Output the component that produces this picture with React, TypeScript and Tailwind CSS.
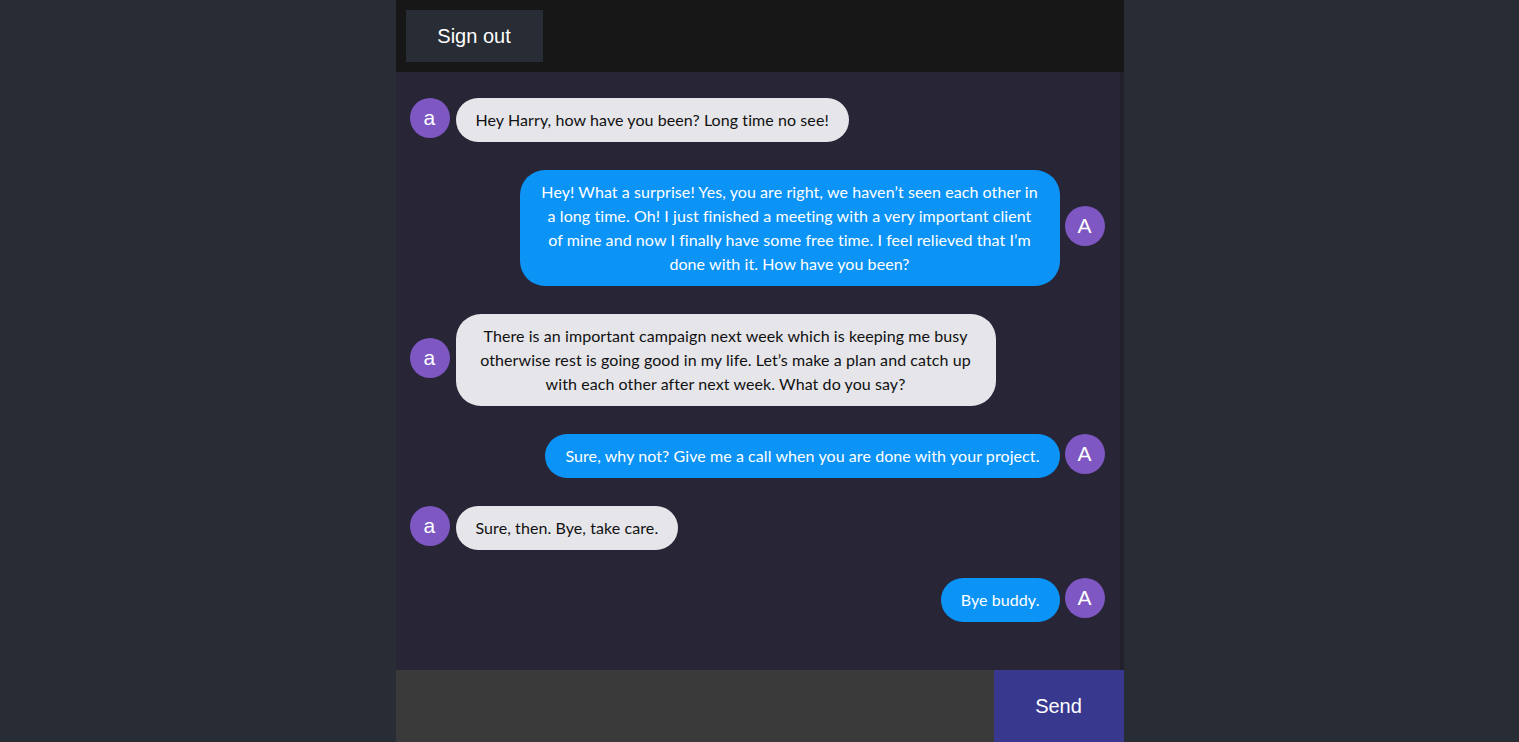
import React from "react";

type Msg = { sent: boolean; lines: string[]; wide?: boolean };

const messages: Msg[] = [
  { sent: false, lines: ["Hey Harry, how have you been? Long time no see!"] },
  {
    sent: true,
    wide: true,
    lines: [
      "Hey! What a surprise! Yes, you are right, we haven\u2019t seen each other in",
      "a long time. Oh! I just finished a meeting with a very important client",
      "of mine and now I finally have some free time. I feel relieved that I\u2019m",
      "done with it. How have you been?",
    ],
  },
  {
    sent: false,
    wide: true,
    lines: [
      "There is an important campaign next week which is keeping me busy",
      "otherwise rest is going good in my life. Let\u2019s make a plan and catch up",
      "with each other after next week. What do you say?",
    ],
  },
  { sent: true, lines: ["Sure, why not? Give me a call when you are done with your project."] },
  { sent: false, lines: ["Sure, then. Bye, take care."] },
  { sent: true, lines: ["Bye buddy."] },
];

function Avatar({ letter }: { letter: string }) {
  return (
    <div className="w-10 h-10 shrink-0 rounded-full bg-[#7e57c2] mx-[5px] my-[2px] flex items-center justify-center text-white text-[21px] font-['Liberation_Sans',Arial,sans-serif] leading-none">
      <span className="-mt-[2px]">{letter}</span>
    </div>
  );
}

export default function App() {
  return (
    <div className="min-h-screen bg-[#282c34]">
      <div className="w-[728px] mx-auto h-screen flex flex-col">
        <header className="h-[72px] shrink-0 bg-[#181717] flex items-center px-[10px]">
          <button className="w-[137px] h-[52px] bg-[#282c34] text-white text-[20px] font-['Liberation_Sans',Arial,sans-serif]">
            Sign out
          </button>
        </header>
        <div className="flex-1 flex bg-[#282536] overflow-hidden">
          <main className="flex-1 pl-[9px] pr-[10px] pt-[10px] flex flex-col font-['Lato','Noto_Sans',sans-serif] text-[16px] tracking-[0.08px]">
            {messages.map((m, i) => (
              <div
                key={i}
                className={`flex items-center ${m.sent ? "flex-row-reverse" : "flex-row"}`}
              >
                <Avatar letter={m.sent ? "A" : "a"} />
                <div
                  className={`mt-4 mb-3 px-5 py-[10px] rounded-[25px] text-center leading-6 ${
                    m.wide ? "w-[540px]" : ""
                  } ${m.sent ? "bg-[#0b93f6] text-white" : "bg-[#e5e5ea] text-[#111] ml-[1px]"}`}
                >
                  {m.lines.map((l, j) => (
                    <span key={j} className="block whitespace-nowrap">
                      {l}
                    </span>
                  ))}
                </div>
              </div>
            ))}
          </main>
          <div className="w-[4px] shrink-0 bg-[#21202c]" />
        </div>
        <form className="h-[72px] shrink-0 flex" onSubmit={(e) => e.preventDefault()}>
          <input className="flex-1 min-w-0 bg-[#3a3a3a] text-white outline-none border-none px-[10px] text-[24px]" />
          <button className="w-[130px] bg-[#38388f] text-white text-[20px] font-['Liberation_Sans',Arial,sans-serif]">
            Send
          </button>
        </form>
      </div>
    </div>
  );
}
